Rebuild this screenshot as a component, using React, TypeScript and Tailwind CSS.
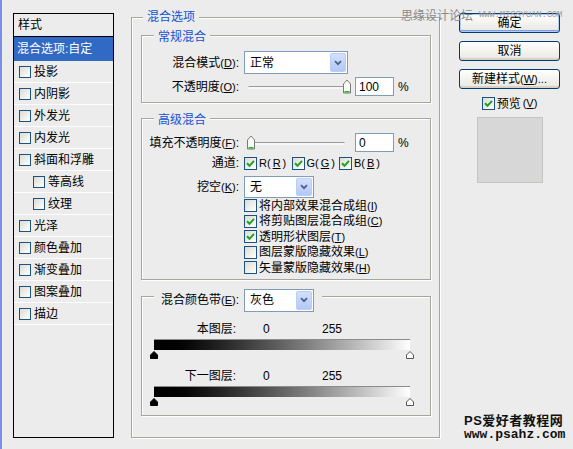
// Photoshop "图层样式" dialog, blending options page.
import type { ReactNode } from "react";

const ui = "font-['Liberation_Sans','Noto_Sans_CJK_SC',sans-serif]";
const etched = "border border-[#a7a69b] shadow-[1px_1px_0_#fff,inset_1px_1px_0_#fff]";

const styles = [
  { t: "投影" },
  { t: "内阴影" },
  { t: "外发光" },
  { t: "内发光" },
  { t: "斜面和浮雕" },
  { t: "等高线", sub: true },
  { t: "纹理", sub: true },
  { t: "光泽" },
  { t: "颜色叠加" },
  { t: "渐变叠加" },
  { t: "图案叠加" },
  { t: "描边" },
];

const options = [
  { t: "将内部效果混合成组", k: "I", on: false },
  { t: "将剪贴图层混合成组", k: "C", on: true },
  { t: "透明形状图层", k: "T", on: true },
  { t: "图层蒙版隐藏效果", k: "L", on: false },
  { t: "矢量蒙版隐藏效果", k: "H", on: false },
];

function Check({ on, small }: { on?: boolean; small?: boolean }) {
  return (
    <span
      className={`flex shrink-0 items-center justify-center border border-[#1c5180] bg-gradient-to-br from-[#dcdcd4] to-white ${
        small ? "h-[12px] w-[12px]" : "h-[13px] w-[13px]"
      }`}
    >
      {on ? (
        <svg width="9" height="9" viewBox="0 0 9 9">
          <path d="M1 4.2 L3.5 6.8 L8 1.8" fill="none" stroke="#21a121" strokeWidth="2" />
        </svg>
      ) : null}
    </span>
  );
}

function Key({ text, k }: { text: string; k: string }) {
  return (
    <>
      {text}
      <span className="text-[11px]">
        (<u>{k}</u>)
      </span>
    </>
  );
}

function Select({ value, className }: { value: string; className: string }) {
  return (
    <div className={`flex items-center border border-[#7f9db9] bg-white p-[1px] ${className}`}>
      <span className="flex-1 pl-[4px] text-[12px]">{value}</span>
      <span className="flex h-full w-[16px] items-center justify-center rounded-[2px] border border-[#b9cdf7] bg-gradient-to-b from-[#d3e0fd] to-[#b3c8f5]">
        <svg width="8" height="6" viewBox="0 0 8 6">
          <path d="M1 1.2 L4 4.2 L7 1.2" fill="none" stroke="#4d6185" strokeWidth="1.8" />
        </svg>
      </span>
    </div>
  );
}

function Thumb({ className }: { className: string }) {
  return (
    <svg className={className} width="8" height="15" viewBox="0 0 8 15">
      <path d="M0.5 5 L4 1 L7.5 5 L7.5 14 L0.5 14 Z" fill="#fbfbf8" stroke="#7b7b7b" />
      <path d="M1.5 12.8 H6.5" stroke="#2bb52b" strokeWidth="1.6" />
    </svg>
  );
}

function Slider({ end }: { end?: boolean }) {
  return (
    <div className="relative h-[15px] w-[104px]">
      <div className="absolute left-[4px] right-[3px] top-[7px] h-[3px] rounded-full border-t border-[#9a9a9a] bg-[#f6f6f2]" />
      <Thumb className={end ? "absolute right-[-3px] top-0" : "absolute left-[3px] top-0"} />
    </div>
  );
}

function NumBox({ value }: { value: string }) {
  return (
    <div className="ml-[7px] flex h-[19px] w-[39px] items-center border border-[#7f9db9] bg-white pl-[3px] text-[12px]">
      {value}
    </div>
  );
}

function Legend({ children, className }: { children: ReactNode; className: string }) {
  return (
    <div className={`w-fit bg-[#ececec] px-[4px] text-[12px] leading-[16px] text-[#1550d6] ${className}`}>
      {children}
    </div>
  );
}

function Marker({ dark }: { dark?: boolean }) {
  return (
    <svg width="8" height="8" viewBox="0 0 8 8">
      <path
        d="M4 0.5 L7.5 4 L7.5 7.5 L0.5 7.5 L0.5 4 Z"
        fill={dark ? "#000" : "#fff"}
        stroke={dark ? "#000" : "#555"}
      />
    </svg>
  );
}

function Band({ label }: { label: string }) {
  return (
    <>
      <div className="mt-[9px] flex h-[16px] items-center text-[12px]">
        <span className="w-[94px] text-right">{label}:</span>
        <span className="ml-[27px] w-[59px]">0</span>
        <span>255</span>
      </div>
      <div className="ml-[12px] mt-[2px] h-[11px] w-[256px] border-t border-[#8c8c8c] bg-gradient-to-r from-black to-white" />
      <div className="ml-[8px] mt-[1px] flex w-[264px] justify-between">
        <Marker dark />
        <Marker />
      </div>
    </>
  );
}

function Btn({ children, primary }: { children: ReactNode; primary?: boolean }) {
  return (
    <button
      className={`flex h-[20px] w-[101px] items-center justify-center rounded-[3px] border border-[#003c74] bg-gradient-to-b from-white to-[#e8e7e0] text-[12px] ${
        primary
          ? "shadow-[inset_0_0_0_1px_#b5cbf3,inset_0_-2px_0_#7c9fe6]"
          : "shadow-[inset_0_-2px_0_#d8d2c6]"
      }`}
    >
      {children}
    </button>
  );
}

export default function App() {
  return (
    <div className={`relative flex h-[449px] w-[573px] border-l-2 border-[#7b8ee6] bg-[#ececec] text-black ${ui}`}>
      {/* style list */}
      <div className="ml-[11px] mt-[13px] h-[425px] w-[101px] border border-black bg-[#ececec] text-[12px]">
        <div className="flex h-[23px] items-center border-b border-black pl-[4px]">样式</div>
        <div className="flex h-[24px] items-center bg-[#316ac5] pl-[3px] text-white">混合选项:自定</div>
        {styles.map((s) => (
          <div
            key={s.t}
            className={`flex h-[22px] items-center gap-[3px] border-b border-white ${s.sub ? "pl-[19px]" : "pl-[5px]"}`}
          >
            <Check small />
            {s.t}
          </div>
        ))}
      </div>

      {/* blending options */}
      <div className={`ml-[17px] mt-[17px] flex h-[421px] w-[309px] flex-col pl-[9px] pr-[8px] ${etched}`}>
        <Legend className="-mt-[9px] ml-[2px]">混合选项</Legend>

        <div className={`mt-[10px] pb-[6px] ${etched}`}>
          <Legend className="-mt-[7px] ml-[12px]">常规混合</Legend>
          <div className="mt-[6px] flex h-[23px] items-center text-[12px]">
            <span className="w-[97px] text-right">
              <Key text="混合模式" k="D" />:
            </span>
            <Select value="正常" className="ml-[5px] h-[23px] w-[104px]" />
          </div>
          <div className="mt-[3px] flex h-[19px] items-center text-[12px]">
            <span className="w-[97px] text-right">
              <Key text="不透明度" k="O" />:
            </span>
            <div className="ml-[5px]">
              <Slider end />
            </div>
            <NumBox value="100" />
            <span className="ml-[4px]">%</span>
          </div>
        </div>

        <div className={`mt-[15px] pb-[3px] ${etched}`}>
          <Legend className="-mt-[7px] ml-[12px]">高级混合</Legend>
          <div className="mt-[5px] flex h-[19px] items-center text-[12px]">
            <span className="w-[97px] text-right">
              <Key text="填充不透明度" k="F" />:
            </span>
            <div className="ml-[5px]">
              <Slider />
            </div>
            <NumBox value="0" />
            <span className="ml-[4px]">%</span>
          </div>
          <div className="mt-[3px] flex h-[16px] items-center text-[12px]">
            <span className="w-[97px] text-right">通道:</span>
            <div className="ml-[5px] flex">
              {["R", "G", "B"].map((c) => (
                <span key={c} className="flex w-[47.5px] items-center gap-[2px] text-[11px]">
                  <Check on />
                  {c}(<u>{c}</u>)
                </span>
              ))}
            </div>
          </div>
          <div className="mt-[5px] flex h-[22px] items-center text-[12px]">
            <span className="w-[97px] text-right">
              <Key text="挖空" k="K" />:
            </span>
            <Select value="无" className="ml-[5px] h-[22px] w-[70px]" />
          </div>
          <div className="pl-[102px]">
            {options.map((o) => (
              <div key={o.k} className="flex h-[15.5px] items-center gap-[2px] text-[12px]">
                <Check on={o.on} />
                <span className="whitespace-nowrap">
                  <Key text={o.t} k={o.k} />
                </span>
              </div>
            ))}
          </div>
        </div>

        <div className={`mt-[16px] pb-[9px] ${etched}`}>
          <div className="-mt-[8px] ml-[12px] flex h-[23px] w-fit items-center bg-[#ececec] pl-[4px] pr-[8px] text-[12px]">
            <span className="w-[81px] shrink-0 whitespace-nowrap text-right">
              <Key text="混合颜色带" k="E" />:
            </span>
            <Select value="灰色" className="ml-[5px] h-[23px] w-[70px]" />
          </div>
          <Band label="本图层" />
          <Band label="下一图层" />
        </div>
      </div>

      {/* buttons */}
      <div className="ml-[19px] mt-[13px] flex w-[101px] flex-col gap-[8px] text-[12px]">
        <Btn primary>确定</Btn>
        <Btn>取消</Btn>
        <Btn>
          新建样式<span className="text-[11px]">(<u>W</u>)...</span>
        </Btn>
        <div className="flex h-[13px] items-center justify-center gap-[2px]">
          <Check on />
          <Key text="预览" k="V" />
        </div>
        <div className="mx-auto -mt-[1px] h-[66px] w-[66px] border border-[#c4c4c0] bg-[#d7d7d7]" />
      </div>

      {/* watermarks */}
      <div className="absolute left-[399px] top-[7px] flex items-center gap-[6px] text-[12px] text-[#8a8a8a]">
        <span>思缘设计论坛</span>
        <span className="font-['Liberation_Mono',monospace] text-[9px] tracking-[-0.2px] text-[#9c9c9c]">
          WWW.MISSYUAN.COM
        </span>
      </div>
      <div className="absolute left-[462px] top-[414px] text-[13px] font-bold leading-[14px] text-[#111]">
        <div className="tracking-[0.5px]">PS爱好者教程网</div>
        <div className="font-['Liberation_Mono',monospace]">www.psahz.com</div>
      </div>
    </div>
  );
}
